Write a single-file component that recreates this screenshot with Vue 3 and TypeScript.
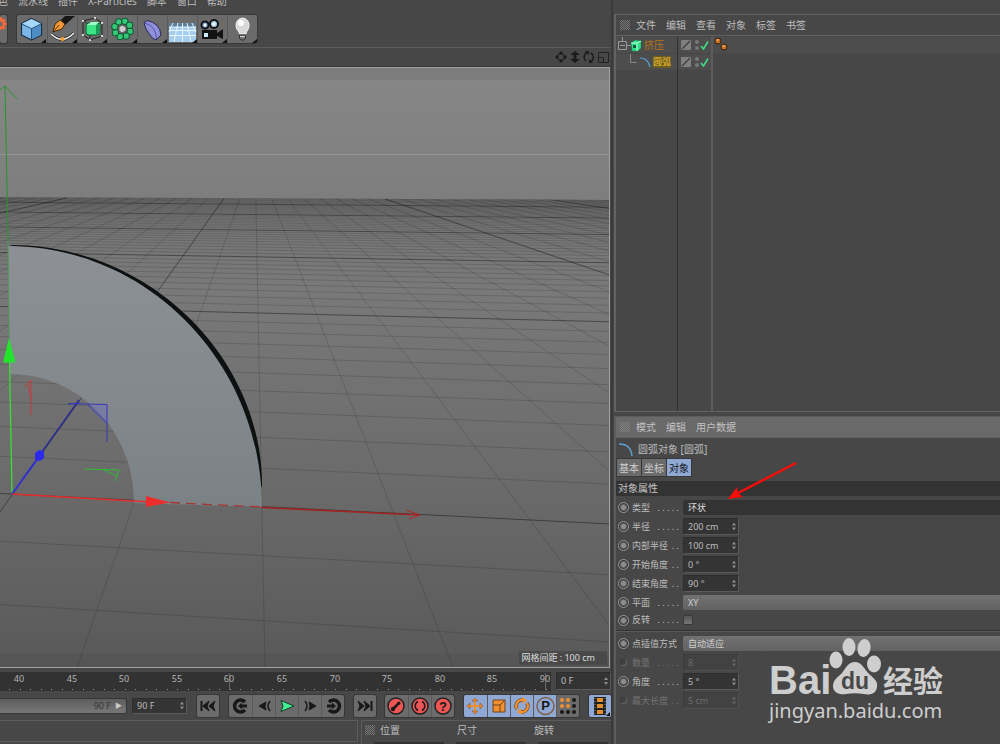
<script setup lang="ts">
import { ref } from 'vue'

interface GridLine { x1: number; y1: number; x2: number; y2: number; major: boolean }
interface Row {
  id: string
  label: string
  dots: string
  kind: 'number' | 'dark' | 'light' | 'check'
  value: string
  disabled?: boolean
}

const menus = ['色', '流水线', '插件', 'X-Particles', '脚本', '窗口', '帮助']
const objectMenus = ['文件', '编辑', '查看', '对象', '标签', '书签']
const attributeMenus = ['模式', '编辑', '用户数据']
const tabs = ['基本', '坐标', '对象']
const activeTab = ref('对象')

// Ground plane in perspective: horizon and vanishing point.
const horizon = 155
const vanishX = 255
const gridLines: GridLine[] = []
for (let k = 60; k >= -2; k--) {
  gridLines.push({
    x1: 0,
    y1: horizon + 2742 / (k + 8.1),
    x2: 610,
    y2: horizon + 3044 / (k + 8.25),
    major: k % 10 === 0,
  })
}
for (let j = -22; j <= 32; j++) {
  const slope = 0.0195 + 0.367 * (j - 2)
  gridLines.push({
    x1: vanishX + slope * 43,
    y1: horizon + 43,
    x2: vanishX + slope * 513,
    y2: horizon + 513,
    major: j % 10 === 0,
  })
}

const frames = Array.from({ length: 11 }, (_, i) => ({ n: 40 + i * 5, x: Math.round(19 + i * 52.6) }))
const ticks = Array.from({ length: 52 }, (_, i) => Math.round(9 + i * 10.52))

const rows: Row[] = [
  { id: 'type', label: '类型', dots: '. . . . .', kind: 'dark', value: '环状' },
  { id: 'radius', label: '半径', dots: '. . . . .', kind: 'number', value: '200 cm' },
  { id: 'inner', label: '内部半径', dots: '. .', kind: 'number', value: '100 cm' },
  { id: 'start', label: '开始角度', dots: '. .', kind: 'number', value: '0 °' },
  { id: 'end', label: '结束角度', dots: '. .', kind: 'number', value: '90 °' },
  { id: 'plane', label: '平面', dots: '. . . . .', kind: 'light', value: 'XY' },
  { id: 'reverse', label: '反转', dots: '. . . . .', kind: 'check', value: '' },
]
const pointRows: Row[] = [
  { id: 'interp', label: '点插值方式', dots: '', kind: 'light', value: '自动适应' },
  { id: 'count', label: '数量', dots: '. . . . .', kind: 'number', value: '8', disabled: true },
  { id: 'angle', label: '角度', dots: '. . . . .', kind: 'number', value: '5 °' },
  { id: 'maxlen', label: '最大长度', dots: '. .', kind: 'number', value: '5 cm', disabled: true },
]
const groups = [rows, pointRows]
const petals = Array.from({ length: 8 }, (_, i) => ({
  x: 14.5 + 8 * Math.cos((i * Math.PI) / 4 + 0.3),
  y: 14 + 8 * Math.sin((i * Math.PI) / 4 + 0.3),
}))
</script>

<template>
  <div class="app">
    <main class="left">
      <nav class="menubar">
        <a v-for="m in menus" :key="m" href="#">{{ m }}</a>
      </nav>

      <div class="toolbar">
        <div class="group first">
          <button aria-label="渲染设置">
            <svg width="7" height="28"><circle cx="0" cy="9" r="4" fill="none" stroke="#f2683c" stroke-width="3" /><path d="M-1 3h2v3M3 4l2 2M4 9h3M3 14l2 -2M0 15v-3" stroke="#f2683c" stroke-width="2" /></svg>
          </button>
        </div>
        <div class="group tools">
          <button aria-label="立方体">
            <svg width="30" height="28">
              <path d="M14.5 3.5 24.5 8.5V20L14.5 25 4.5 20V8.5z" fill="#79b7ea" stroke="#1b2f42" stroke-width="1.2" />
              <path d="M14.5 4 24 8.7 14.5 13.5 5 8.7z" fill="#a6d8fb" />
              <path d="M24 9.2V19.7L14.7 24.3V13.9z" fill="#4e8dc3" />
              <path d="M5 9l9.5 4.7V24.5M14.5 13.7 24 9" fill="none" stroke="#2a5377" />
              <path d="M29 24v4h-5z" fill="#111" />
            </svg>
          </button>
          <button aria-label="画笔">
            <svg width="30" height="28">
              <path d="M13 5 17 1h10L17 10z" fill="#161616" />
              <path d="M5 17 7 9 12 5l5 4-3 5z" fill="#f29a3a" stroke="#482606" />
              <path d="M5 17l6-7" stroke="#5b3005" />
              <path d="M3 19q11.500 11 23-1" fill="none" stroke="#282828" stroke-width="3" />
              <path d="M3 19q11.500 11 23-1" fill="none" stroke="#eee" stroke-width="1.6" />
              <circle cx="14.5" cy="24" r="2" fill="#ffa02e" />
              <path d="M29 24v4h-5z" fill="#111" />
            </svg>
          </button>
          <button aria-label="细分曲面">
            <svg width="30" height="28">
              <path d="M5 6 17 3l7 5v13L12 25l-7-5zM5 6l7 4 12-2M12 10v15" fill="none" stroke="#222" />
              <rect x="8" y="8" width="14" height="12" rx="3" fill="#3be385" stroke="#0d5f35" />
              <path d="M9 10l4-3h8l-3 3z" fill="#a0ffc9" /><path d="M18 10l4-2v10l-4 2z" fill="#1a9b58" />
              <g fill="#fff"><circle cx="5" cy="6" r="1" /><circle cx="17" cy="3" r="1" /><circle cx="24" cy="8" r="1" /><circle cx="24" cy="21" r="1" /><circle cx="12" cy="25" r="1" /><circle cx="5" cy="20" r="1" /></g>
              <path d="M29 24v4h-5z" fill="#111" />
            </svg>
          </button>
          <button aria-label="阵列">
            <svg width="30" height="28">
              <rect v-for="(p, i) in petals" :key="i" :x="p.x - 3" :y="p.y - 3" width="6" height="6" rx="2" fill="#32c878" stroke="#0c4f2d" />
              <path d="M11 12l3-2 4 2v4l-4 2-3-2z" fill="#ccc" stroke="#555" />
              <path d="M29 24v4h-5z" fill="#111" />
            </svg>
          </button>
          <button aria-label="弯曲">
            <svg width="30" height="28">
              <path d="M6 8 9 5.500Q22 8 23 20L18 25Q14 24 12 20 7 14 6 8z" fill="#8f90db" stroke="#272750" />
              <path d="M7 8Q18 11 18.500 24" fill="none" stroke="#5658a0" />
              <path d="M29 24v4h-5z" fill="#111" />
            </svg>
          </button>
          <button aria-label="地面">
            <svg width="30" height="28">
              <path d="M1 8h27v19H1z" fill="#a5cdee" /><path d="M1 8h27v4H1z" fill="#5c7d99" />
              <path d="M1 15.500h27M1 20.500h27M1 12h27M14.500 8v19M10 8 6 27M19 8l4 19M5 8l-4 9M24 8l4 9" fill="none" stroke="#e8f6ff" />
              <path d="M29 24v4h-5z" fill="#111" />
            </svg>
          </button>
          <button aria-label="摄像机">
            <svg width="30" height="28">
              <path d="M4 15h15v3l6-4v10l-6-3v3H4z" fill="#131313" />
              <circle cx="7" cy="10" r="3.5" fill="#8eb8dc" stroke="#141414" stroke-width="2" /><circle cx="16" cy="9" r="4" fill="#a9d5f5" stroke="#141414" stroke-width="2" />
              <circle cx="7" cy="10" r="1.2" fill="#fff" /><circle cx="16" cy="9" r="1.5" fill="#fff" /><rect x="6" y="18" width="4" height="4" fill="#c8ecff" />
              <path d="M29 24v4h-5z" fill="#111" />
            </svg>
          </button>
          <button aria-label="灯光">
            <svg width="30" height="28">
              <path d="M14.5 3a7 7 0 0 1 6.500 8c0 4-3 5-3 8h-6.500c0-3-3.500-4-3.500-8a7 7 0 0 1 6.500-8z" fill="#d9d9d9" stroke="#eee" />
              <circle cx="13" cy="8" r="3" fill="#fff" /><path d="M11.5 20h6v3l-1.500 2h-3l-1.500-2z" fill="#777" stroke="#333" /><path d="M12 21.500h5" stroke="#ccc" />
              <path d="M29 24v4h-5z" fill="#111" />
            </svg>
          </button>
        </div>
      </div>

      <div class="viewhead">
        <svg width="54" height="14">
          <g fill="#1b1b1b">
            <path d="M6 1 9 4.500H3zM6 13l3-3.500H3zM0 7l3.500-3v6zM12 7 8.500 4v6z" />
            <path d="M20 1l5 4h-3.500v4H25l-5 4-5-4h3.500V5H15z" />
          </g>
          <path d="M31 11a5 5 0 0 1 1-8.500M36 3a5 5 0 0 1 0 8.500" fill="none" stroke="#1b1b1b" stroke-width="1.5" />
          <path d="M30 1h4v4zM38 13h-4V9z" fill="#1b1b1b" />
          <path d="M43.5 2.500h10v10h-10zM43.500 7.500h5v5" fill="none" stroke="#222" />
        </svg>
      </div>

      <section class="viewport">
        <svg class="scene" viewBox="0 68 610 599" preserveAspectRatio="xMinYMin slice">
          <defs>
            <linearGradient id="sky" x1="0" y1="0" x2="0" y2="1"><stop offset="0" stop-color="#878787" /><stop offset="1" stop-color="#7d7d7d" /></linearGradient>
            <linearGradient id="ground" x1="0" y1="0" x2="0" y2="1"><stop offset="0" stop-color="#757575" /><stop offset="0.2" stop-color="#797979" /><stop offset="0.6" stop-color="#6b6b6b" /><stop offset="1" stop-color="#595959" /></linearGradient>
            <linearGradient id="metal" x1="0" y1="0" x2="0" y2="1"><stop offset="0" stop-color="#8d9196" /><stop offset="1" stop-color="#7b8286" /></linearGradient>
            <clipPath id="floor"><path d="M0 197 610 200V667H0z" /></clipPath>
          </defs>
          <rect x="0" y="67" width="610" height="140" fill="url(#sky)" />
          <rect x="0" y="67" width="610" height="13" fill="#7d7d7d" />
          <path d="M0 154.500H610" stroke="#959595" />
          <g clip-path="url(#floor)">
            <rect x="0" y="197" width="610" height="470" fill="url(#ground)" />
            <line v-for="(l, i) in gridLines" :key="i" :x1="l.x1" :y1="l.y1" :x2="l.x2" :y2="l.y2" :class="l.major ? 'major' : 'minor'" />
            <rect x="0" y="653" width="610" height="14" fill="#000" opacity="0.04" />
          </g>
          <path d="M9 245C151 244 264 360 262 488L255 470 180 320 60 260z" fill="#0e1112" />
          <path d="M8 246C148 246 262 363 262 507L134 503C135 432 79 374 10 374z" fill="url(#metal)" />
          <path d="M5 86 8 240" stroke="#26962a" /><path d="M0 90 5 86 17 99" fill="none" stroke="#26962a" />
          <path d="M8 240 9 345" stroke="#4c9b55" /><path d="M9.5 362 12 493" stroke="#35df35" stroke-width="1.3" />
          <path d="M9 338 15.500 362.500H3z" fill="#23e52c" />
          <path d="M12 494 79 400" stroke="#2b2b98" stroke-width="1.4" /><path d="M12 494 40 456" stroke="#3434e4" stroke-width="1.4" />
          <path d="M35 453l4-3 5 1v7l-4 3-5-1z" fill="#2a2ae8" />
          <path d="M88 405 107 405v20z" fill="#6a6ad0" opacity="0.35" />
          <path d="M68 403.500 107 404.500V442M88 405l19 18M68 404l12 -1" fill="none" stroke="#3737b8" />
          <path d="M31 415V380l-7 7M28 384l3 15" fill="none" stroke="#c43a3a" />
          <path d="M84 469 119 470l-4 11M102 469l15 7" fill="none" stroke="#2fbd32" />
          <path d="M12 494 150 502" stroke="#e62d2d" stroke-width="1.3" /><path d="M170 502.500 261 507" stroke="#a63434" stroke-width="1.3" stroke-dasharray="10 6" />
          <path d="M261 507.500 420 515" stroke="#a32222" stroke-width="1.6" /><path d="M406 510l14 5-11 4" fill="none" stroke="#b02525" />
          <path d="M146 496 170 502.500 146 507z" fill="#ed2c2c" />
        </svg>
        <span class="spacing">网格间距 : 100 cm</span>
      </section>

      <div class="timeline">
        <svg class="ruler">
          <path d="M229.500 1V18M545.500 1V18" stroke="#666" />
          <rect v-for="t in ticks" :key="t" :x="t" y="17" width="1" height="1" fill="#999" />
          <text v-for="f in frames" :key="f.n" :x="f.x" y="10" text-anchor="middle">{{ f.n }}</text>
        </svg>
        <label class="field current"><input aria-label="当前帧" value="0 F" /><i class="spin"></i></label>
      </div>

      <div class="transport">
        <div class="slider"><span>90 F</span><b>▶</b></div>
        <label class="field end"><input aria-label="结束帧" value="90 F" /><i class="spin"></i></label>
        <div class="group jump"><button aria-label="转到开始"><svg width="22" height="22"><path d="M4.500 6v10" stroke="#181818" stroke-width="2" /><path d="M12 6 6 11l6 5-2-5zM18 6l-6 5 6 5-2-5z" fill="#181818" stroke="#181818" /></svg></button></div>
        <div class="group play">
          <button aria-label="上一关键帧"><svg width="23" height="22"><path d="M16 7a6 6 0 1 0 0 8" fill="none" stroke="#181818" stroke-width="3.5" /><path d="M9 11l4-3.500v2h5v3h-5v2z" fill="#181818" /></svg></button>
          <button aria-label="上一帧"><svg width="23" height="22"><path d="M6 11l7-4-1 4 1 4z" fill="#181818" stroke="#181818" /><path d="M17 6q-4 5 0 10" fill="none" stroke="#181818" stroke-width="1.5" /></svg></button>
          <button aria-label="播放"><svg width="23" height="22"><path d="M5 5.500 18 11 5 16.500 7 11z" fill="#43ee94" stroke="#103d27" /></svg></button>
          <button aria-label="下一帧"><svg width="23" height="22"><path d="M17 11l-7-4 1 4-1 4z" fill="#181818" stroke="#181818" /><path d="M6 6q4 5 0 10" fill="none" stroke="#181818" stroke-width="1.5" /></svg></button>
          <button aria-label="下一关键帧"><svg width="23" height="22"><path d="M7 7a6 6 0 1 1 0 8" fill="none" stroke="#181818" stroke-width="3.5" /><path d="M14 11l-4-3.500v2H5v3h5v2z" fill="#181818" /></svg></button>
        </div>
        <div class="group jump"><button aria-label="转到结束"><svg width="22" height="22"><path d="M17.500 6v10" stroke="#181818" stroke-width="2" /><path d="M10 6l6 5-6 5 2-5zM4 6l6 5-6 5 2-5z" fill="#181818" stroke="#181818" /></svg></button></div>
        <div class="group record">
          <button aria-label="记录"><svg width="23" height="22"><circle cx="11" cy="11" r="8" fill="#ee5555" stroke="#202020" stroke-width="1.5" /><path d="M8 14 14 8" stroke="#1a1a1a" stroke-width="2.5" /><circle cx="8" cy="14" r="2.2" fill="#1a1a1a" /><circle cx="14" cy="8" r="1.600" fill="#1a1a1a" /></svg></button>
          <button aria-label="自动关键帧"><svg width="23" height="22"><circle cx="11" cy="11" r="8" fill="#ee5555" stroke="#202020" stroke-width="1.5" /><path d="M9 6.500a5 5 0 0 0 0 9M13 6.500a5 5 0 0 1 0 9" fill="none" stroke="#1a1a1a" stroke-width="1.5" /></svg></button>
          <button aria-label="关键帧选集"><svg width="23" height="22"><circle cx="11" cy="11" r="8" fill="#ee5555" stroke="#202020" stroke-width="1.5" /><text x="11" y="15.500" text-anchor="middle" class="mark">?</text></svg></button>
        </div>
        <div class="group keys">
          <button class="on" aria-label="位置"><svg width="23" height="22"><path d="M11 5v12M5 11h12" stroke="#f09030" stroke-width="2" /><path d="M11 3l3 3H8zM11 19l3-3H8zM3 11l3-3v6zM19 11l-3-3v6z" fill="#f09030" stroke="#74451a" stroke-width="0.5" /></svg></button>
          <button class="on" aria-label="缩放"><svg width="23" height="22"><path d="M5 5h12v12H5z" fill="#f09030" stroke="#70401a" /><path d="M5 10h7v7M12 10l5-5" fill="none" stroke="#70401a" /></svg></button>
          <button class="on" aria-label="旋转"><svg width="23" height="22"><path d="M6 14a6 6 0 0 1 6-9M16 8a6 6 0 0 1-6 9" fill="none" stroke="#70401a" stroke-width="3.5" /><path d="M6 14a6 6 0 0 1 6-9M16 8a6 6 0 0 1-6 9" fill="none" stroke="#f09030" stroke-width="2.2" /><path d="M11 2l5 3-4 4zM11 20l-5-3 4-4z" fill="#f09030" /></svg></button>
          <button class="on" aria-label="参数"><svg width="23" height="22"><circle cx="11.500" cy="11" r="8.500" fill="none" stroke="#7d6045" stroke-width="1.5" /><text x="11.500" y="15" text-anchor="middle" class="mark">P</text></svg></button>
          <button aria-label="点级别动画"><svg width="23" height="22"><g fill="#f09030"><circle cx="5" cy="5" r="2" /><circle cx="11" cy="5" r="2" /><circle cx="5" cy="11" r="2" /><circle cx="11" cy="11" r="2" /></g><g fill="#181818"><circle cx="17" cy="5" r="2" /><circle cx="17" cy="11" r="2" /><circle cx="5" cy="17" r="2" /><circle cx="11" cy="17" r="2" /><circle cx="17" cy="17" r="2" /></g></svg></button>
        </div>
        <div class="group film"><button class="on" aria-label="影片"><svg width="22" height="22"><path d="M5 2h12v18H5z" fill="#222" /><path d="M8 3h6v4H8zM8 9h6v4H8zM8 15h6v4H8z" fill="#e2902f" /><path d="M6 3v17M16 3v17" stroke="#999" stroke-dasharray="1 2" /><path d="M21 17v4h-4z" fill="#111" /></svg></button></div>
      </div>

      <div class="bottom">
        <div class="material"></div>
        <div class="coords">
          <div class="coordhead"><i class="grip"></i><span>位置</span><span>尺寸</span><span>旋转</span></div>
          <div class="slots"><i></i><i></i><i></i></div>
        </div>
      </div>
    </main>

    <aside class="right">
      <section class="objects">
        <nav class="panelmenu"><i class="grip"></i><a v-for="m in objectMenus" :key="m" href="#">{{ m }}</a></nav>
        <div class="tree">
          <ul class="names">
            <li>
              <svg width="26" height="16"><path d="M6.500 0v4M11 8.500h4M2.500 4.500h8v8h-8zM4 8.500h5" fill="none" stroke="#999" /><path d="M15 6l4-3 6 1v7l-3 3h-6z" fill="#2ee08a" stroke="#117a49" stroke-width="0.5" /><path d="M15 6h6l4-2M21 6v8" stroke="#b4ffd7" fill="none" /><path d="M17 8h3v3h-3z" fill="#155b39" /></svg>
              <span class="extrude">挤压</span>
            </li>
            <li>
              <svg width="35" height="16"><path d="M14.500 0v8.500h6" fill="none" stroke="#888" /><path d="M24 4q8 0 10 9" fill="none" stroke="#5b9fd0" stroke-width="1.2" /></svg>
              <span class="arc">圆弧</span>
            </li>
          </ul>
          <ul class="flags">
            <li v-for="n in 2" :key="n">
              <svg width="33" height="16"><rect x="3" y="3" width="10" height="10" rx="1" fill="#808080" /><path d="M4 12 12 4" stroke="#3d3d3d" stroke-width="1.2" /><circle cx="19" cy="5" r="2" fill="#777" /><circle cx="19" cy="11" r="2" fill="#777" /><path d="M23 9l2.500 3L30 4.500" fill="none" stroke="#3fe086" stroke-width="1.500" /></svg>
            </li>
          </ul>
          <ul class="tags">
            <li><svg width="16" height="16"><circle cx="4" cy="4" r="3" fill="#c96f24" stroke="#35220f" /><circle cx="10" cy="10" r="3" fill="#c96f24" stroke="#35220f" /><circle cx="3.500" cy="3" r="1" fill="#f2b273" /><circle cx="9.500" cy="9" r="1" fill="#f2b273" /></svg></li>
            <li></li>
          </ul>
        </div>
      </section>

      <section class="attributes">
        <nav class="panelmenu light"><i class="grip"></i><a v-for="m in attributeMenus" :key="m" href="#">{{ m }}</a></nav>
        <header class="title">
          <svg width="16" height="18"><path d="M1 4q12 0 13 12" fill="none" stroke="#5ea5d8" stroke-width="1.3" /></svg>
          <span>圆弧对象 [圆弧]</span>
        </header>
        <div class="tabs">
          <button v-for="t in tabs" :key="t" :class="{ active: t === activeTab }" @click="activeTab = t">{{ t }}</button>
        </div>
        <h2>对象属性</h2>
        <form class="props" @submit.prevent>
          <div v-for="(g, gi) in groups" :key="gi" class="block">
            <div v-for="r in g" :key="r.id" class="row" :class="[r.kind, { disabled: r.disabled }]">
              <button type="button" class="key" :aria-label="r.label + ' 关键帧'"></button>
              <label :for="r.id"><span>{{ r.label }}</span><span class="dots">{{ r.dots }}</span></label>
              <div v-if="r.kind === 'number'" class="field"><input :id="r.id" :value="r.value" :disabled="r.disabled" /><i class="spin"></i></div>
              <input v-else-if="r.kind === 'check'" :id="r.id" type="checkbox" />
              <select v-else :id="r.id"><option>{{ r.value }}</option></select>
            </div>
          </div>
        </form>
        <svg class="pointer" width="72" height="42"><path d="M70 3 12 33" stroke="#f80d08" stroke-width="2.5" /><path d="M2 39 11 27 12 33 17 37z" fill="#f80d08" /></svg>
        <svg class="watermark" width="190" height="90">
          <g fill="#cecece">
            <text x="3" y="58" class="bai">Bai</text>
            <ellipse cx="70" cy="24" rx="6.500" ry="8.500" /><ellipse cx="83" cy="11" rx="6.500" ry="9" /><ellipse cx="98" cy="12" rx="6.500" ry="9" transform="rotate(10 98 12)" /><ellipse cx="108" cy="28" rx="7" ry="8.500" />
            <path d="M89 26c7 0 9 7 14 12 6 5 9 8 8 13-1 8-9 8-13 7-6-1-12-1-18 0-6 1-13-1-13-8 0-6 5-9 9-13 4-5 6-11 13-11z" />
            <text x="89" y="53" text-anchor="middle" class="du">du</text>
            <text x="117" y="56" class="jy">经验</text>
            <text x="3" y="82" class="url">jingyan.baidu.com</text>
          </g>
        </svg>
      </section>
    </aside>
  </div>
</template>

<style>
body { margin: 0; background: #474747; }
</style>

<style scoped>
* { box-sizing: border-box; }
.app {
  display: flex;
  min-height: 100vh;
  background: #474747;
  color: #bdbdbd;
  font: 10px/14px "Noto Sans", "Noto Sans CJK SC", sans-serif;
}
a { color: inherit; text-decoration: none; }
ul { list-style: none; margin: 0; padding: 0; }
button { border: 0; padding: 0; margin: 0; background: none; font: inherit; color: inherit; }
svg { display: block; }
.left { flex: 1; min-width: 0; display: flex; flex-direction: column; border-right: 2px solid #3a3a3a; }
.right { width: 386px; margin-left: 1px; padding-top: 14px; display: flex; flex-direction: column; flex: none; }

.menubar { display: flex; align-items: flex-end; height: 8px; overflow: hidden; gap: 10px; margin-left: -2px; }
.menubar a { line-height: 14px; white-space: nowrap; }
.toolbar { display: flex; gap: 10px; padding: 7px 0 4px; border-bottom: 1px solid #5b5b5b; height: 40px; }
.group { display: flex; background: #6b6b6b; border-radius: 2px; box-shadow: 0 0 0 1px #383838; overflow: hidden; }
.group button + button { border-left: 1px solid #5a5a5a; }
.group.first { width: 7px; }
.tools button { width: 30px; }
.viewhead { display: flex; justify-content: flex-end; align-items: center; height: 19px; padding-right: 2px; border-bottom: 1px solid #3a3a3a; }

.viewport { position: relative; flex: 1; min-height: 300px; margin-right: 1px; border: solid #a0a0a0; border-width: 1px 1px 1px 0; display: flex; }
.scene { position: absolute; inset: 0; width: 100%; height: 100%; }
.minor { stroke: #000; stroke-opacity: 0.14; }
.major { stroke: #000; stroke-opacity: 0.4; }
.spacing { position: absolute; right: 2px; bottom: 2px; padding: 0 12px 0 2px; background: rgba(60, 60, 60, 0.5); color: #dedede; font-size: 9px; line-height: 14px; }

.timeline { display: flex; gap: 5px; height: 26px; padding-top: 4px; align-items: flex-start; }
.ruler { flex: 1; min-width: 0; height: 19px; background: #323232; }
.ruler text { font-size: 9px; fill: #b4b4b4; }
.field { display: flex; align-items: center; height: 16px; background: #343434; border: 1px solid #2d2d2d; border-bottom-color: #5a5a5a; border-right-color: #5a5a5a; padding: 0 2px 0 4px; }
.field input { flex: 1; min-width: 0; width: 0; border: 0; padding: 0; background: none; color: #bdbdbd; font: inherit; font-size: 9px; line-height: 14px; outline: 0; }
.spin { width: 4px; height: 8px; flex: none; background: #8d8d8d; clip-path: polygon(50% 0, 100% 38%, 0 38%, 0 62%, 100% 62%, 50% 100%, 0 62%, 0 38%); }
.current { width: 55px; height: 18px; }
.transport { display: flex; align-items: center; height: 26px; padding-bottom: 3px; }
.transport .group { height: 22px; }
.slider { flex: 1; height: 16px; display: flex; justify-content: flex-end; align-items: center; gap: 4px; padding-right: 4px; background: linear-gradient(#5d5d5d, #777); border: 1px solid #363636; border-left: 0; border-radius: 0 3px 3px 0; font-size: 9px; color: #353535; }
.slider b { color: #ccc; font-size: 7px; }
.end { width: 55px; margin: 0 10px 0 5px; }
.jump, .film { width: 22px; }
.play { margin: 0 10px; }
.record { margin: 0 10px 0 9px; }
.play button, .record button, .keys button { width: 23px; }
.film { margin-left: 10px; }
.on { background: #8fa9d4; }
.mark { font: bold 13px "Liberation Sans", sans-serif; fill: #181818; }
.bottom { display: flex; gap: 3px; height: 24px; }
.material { flex: 1; height: 22px; border: solid #5c5c5c; border-width: 1px 1px 1px 0; }
.coords { width: 250px; border: solid #5c5c5c; border-width: 1px 0 0 1px; }
.coordhead { display: flex; align-items: center; height: 18px; padding-left: 3px; }
.coordhead span { width: 78px; }
.grip { width: 10px; height: 10px; flex: none; background: repeating-conic-gradient(#8a8a8a 0 25%, transparent 0 50%) 0 0 / 2px 2px; margin-right: 5px; opacity: 0.7; }
.slots { display: flex; gap: 12px; padding: 3px 0 0 12px; }
.slots i { width: 70px; height: 2px; background: #333; }

.objects { height: 398px; border: solid #626262; border-width: 1px 0 1px 2px; display: flex; flex-direction: column; }
.panelmenu { display: flex; align-items: center; gap: 10px; height: 21px; padding-left: 4px; border-bottom: 1px solid #626262; flex: none; }
.panelmenu .grip { margin-right: -4px; }
.panelmenu.light { background: #696969; color: #c2c2c2; }
.tree { display: flex; flex: 1; margin-top: 1px; }
.tree li { height: 16px; display: flex; align-items: center; background: #4d4d4d; margin-bottom: 1px; }
.names { width: 61px; }
.flags { width: 34px; border-left: 1px solid #303030; }
.tags { flex: 1; border-left: 2px solid #5d5d5d; }
.tags li { padding-left: 1px; }
.tags li + li { background: none; }
.extrude { color: #b87418; margin-left: 2px; }
.arc { color: #f0c030; background: #6b5c22; line-height: 12px; margin-left: 2px; white-space: nowrap; font-size: 9px; }

.attributes { position: relative; flex: 1; margin-top: 4px; border: solid #5c5c5c; border-width: 1px 0 0 2px; }
.title { display: flex; align-items: center; gap: 4px; height: 21px; padding-left: 2px; }
.tabs { display: flex; gap: 1px; margin: 0 0 5px 1px; }
.tabs button { width: 24px; height: 17px; background: #6b6b6b; box-shadow: 0 0 0 1px #383838; color: #d0d0d0; }
.tabs .active { background: #8fa9d4; color: #111; }
h2 { margin: 0; padding-left: 2px; height: 15px; font: inherit; line-height: 15px; background: #333; color: #c8c8c8; }
.block { padding-top: 2px; }
.block + .block { border-top: 1px solid #333; box-shadow: inset 0 1px #5a5a5a; padding-top: 3px; }
.row { display: flex; align-items: center; height: 19px; padding-left: 2px; font-size: 9px; }
.row.check { height: 18px; padding-bottom: 2px; }
.key { width: 11px; height: 11px; margin-right: 3px; flex: none; border-radius: 50%; border: 1px solid #999; background: radial-gradient(circle, #8d8d8d 2px, #3a3a3a 4px); }
.row label { display: flex; justify-content: space-between; width: 47px; margin-right: 4px; flex: none; white-space: nowrap; }
.row .field { width: 56px; height: 17px; }
.row select { flex: 1; appearance: none; height: 15px; padding: 0 5px; border: 0; border-radius: 2px 0 0 2px; font: inherit; line-height: 14px; outline: 0; }
.dark select { background: #333; color: #dcdcdc; }
.light select { background: linear-gradient(#727272, #626262); color: #d0d0d0; }
.check input { appearance: none; width: 10px; height: 10px; margin: 0; border-radius: 2px; background: linear-gradient(#555, #777); border: 1px solid #393939; }
.disabled { color: #737373; }
.disabled .field { background: #424242; border-color: #3b3b3b #505050 #505050 #3b3b3b; }
.disabled .field input { color: #6b6b6b; }
.disabled .spin { background: #666; }
.disabled .key { width: 7px; height: 7px; margin: 0 5px 0 2px; border-color: #3a3a3a #666 #666 #3a3a3a; background: #414141; }
.pointer { position: absolute; left: 110px; top: 43px; }
.watermark { position: absolute; right: 44px; top: 219px; }
.bai { font: bold 40px "Liberation Sans", sans-serif; }
.du { font: bold 23px "Liberation Sans", sans-serif; fill: #484848; }
.jy { font: bold 30px "Noto Sans CJK SC", sans-serif; }
.url { font: 20px "Noto Sans", sans-serif; }
</style>
